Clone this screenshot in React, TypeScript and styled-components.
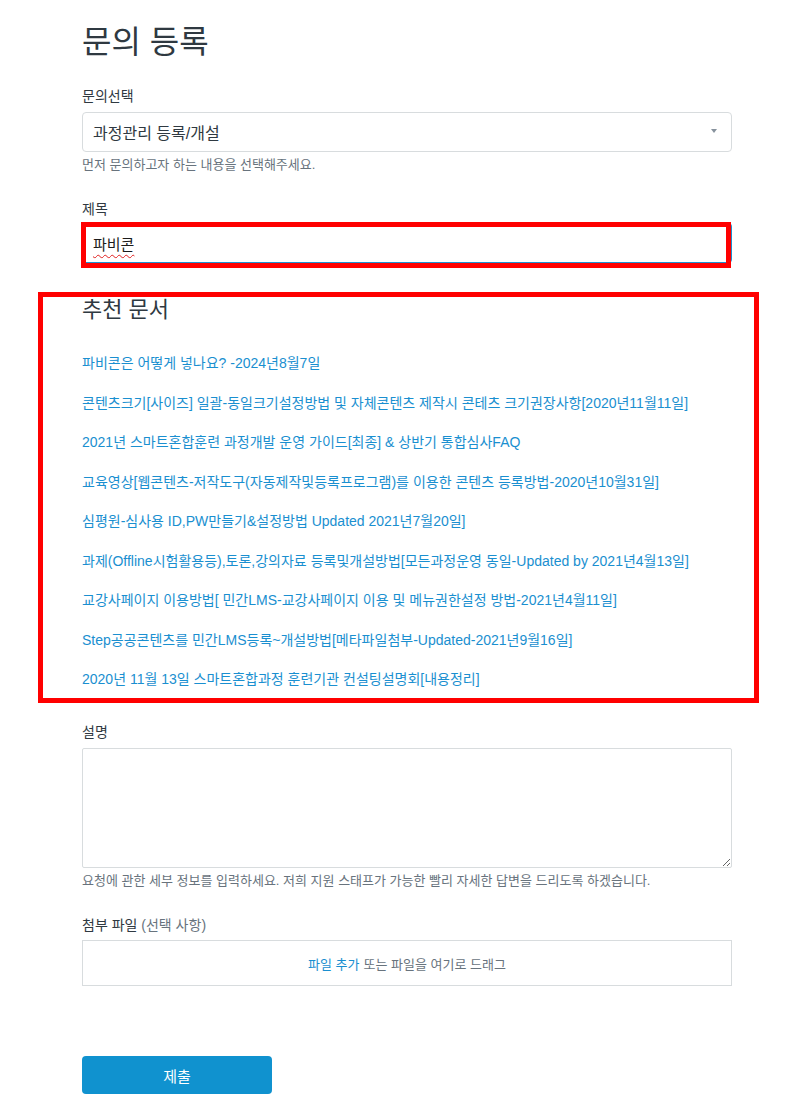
import React from "react";
import styled, { createGlobalStyle } from "styled-components";

const Global = createGlobalStyle`
  html, body { margin: 0; padding: 0; background: #fff; }
  body { font-family: "Liberation Sans", "Noto Sans CJK KR", sans-serif; color: #2f3941; }
  * { box-sizing: border-box; }
`;

const Page = styled.div`
  position: relative;
  width: 805px;
  min-height: 1117px;
  padding: 22px 0 0 82px;
`;

const Container = styled.div`
  width: 650px;
  display: flex;
  flex-direction: column;
`;

const Title = styled.h1`
  margin: 0;
  font-size: 32px;
  line-height: 40px;
  font-weight: 400;
  color: #2f3941;
`;

const Field = styled.div<{ $top: number }>`
  display: flex;
  flex-direction: column;
  margin-top: ${(p) => p.$top}px;
`;

const Label = styled.label<{ $gap?: number }>`
  font-size: 14px;
  line-height: 20px;
  color: #2f3941;
  margin-bottom: ${(p) => p.$gap ?? 6}px;
`;

const Optional = styled.span`
  color: #68737d;
`;

const Select = styled.div`
  position: relative;
  height: 40px;
  border: 1px solid #d8dcde;
  border-radius: 4px;
  padding: 0 10px;
  display: flex;
  align-items: center;
  font-size: 16px;
  color: #2f3941;
`;

const Caret = styled.span`
  position: absolute;
  right: 14px;
  top: 16px;
  width: 0;
  height: 0;
  border-left: 3px solid transparent;
  border-right: 3px solid transparent;
  border-top: 4px solid #87929d;
`;

const Hint = styled.p`
  margin: 4px 0 0;
  font-size: 13px;
  line-height: 18px;
  color: #68737d;
`;

const TextInput = styled.div`
  height: 40px;
  border: 1px solid #d8dcde;
  border-right-color: #1f91d0;
  border-bottom-color: #1f91d0;
  border-radius: 4px;
  padding: 0 10px;
  display: flex;
  align-items: center;
  font-size: 15px;
  color: #1b1b1b;
`;

const Spelled = styled.span`
  text-decoration: underline wavy #e0201f;
  text-decoration-thickness: 1px;
  text-underline-offset: 4px;
`;

const SectionTitle = styled.h2`
  margin: 0;
  font-size: 22px;
  line-height: 28px;
  font-weight: 400;
  color: #2f3941;
`;

const LinkList = styled.ul`
  list-style: none;
  margin: 29px 0 0;
  padding: 0;
  display: flex;
  flex-direction: column;
  gap: 19.5px;
`;

const DocLink = styled.a`
  display: block;
  font-size: 14px;
  line-height: 20px;
  color: #1a8fd0;
  text-decoration: none;
  white-space: nowrap;
`;

const TextArea = styled.textarea`
  height: 120px;
  width: 100%;
  border: 1px solid #d8dcde;
  border-radius: 2px;
  resize: vertical;
  font-family: inherit;
  margin: 0;
  display: block;
`;

const DropZone = styled.div`
  height: 46px;
  border: 1px solid #d8dcde;
  display: flex;
  align-items: center;
  justify-content: center;
  font-size: 13px;
  color: #68737d;
  gap: 4px;
`;

const AddLink = styled.span`
  color: #1a8fd0;
`;

const SubmitButton = styled.button`
  margin-top: 70px;
  width: 190px;
  height: 38px;
  border: none;
  border-radius: 4px;
  background: #1092cf;
  color: #fff;
  font-family: inherit;
  font-size: 15px;
`;

const Highlight = styled.div<{ $x: number; $y: number; $w: number; $h: number }>`
  position: absolute;
  left: ${(p) => p.$x}px;
  top: ${(p) => p.$y}px;
  width: ${(p) => p.$w}px;
  height: ${(p) => p.$h}px;
  border: 5px solid #ff0000;
  pointer-events: none;
`;

const docs = [
  "파비콘은 어떻게 넣나요? -2024년8월7일",
  "콘텐츠크기[사이즈] 일괄-동일크기설정방법 및 자체콘텐츠 제작시 콘테츠 크기권장사항[2020년11월11일]",
  "2021년 스마트혼합훈련 과정개발 운영 가이드[최종] & 상반기 통합심사FAQ",
  "교육영상[웹콘텐츠-저작도구(자동제작및등록프로그램)를 이용한 콘텐츠 등록방법-2020년10월31일]",
  "심평원-심사용 ID,PW만들기&설정방법 Updated 2021년7월20일]",
  "과제(Offline시험활용등),토론,강의자료 등록및개설방법[모든과정운영 동일-Updated by 2021년4월13일]",
  "교강사페이지 이용방법[ 민간LMS-교강사페이지 이용 및 메뉴권한설정 방법-2021년4월11일]",
  "Step공공콘텐츠를 민간LMS등록~개설방법[메타파일첨부-Updated-2021년9월16일]",
  "2020년 11월 13일 스마트혼합과정 훈련기관 컨설팅설명회[내용정리]",
];

export default function App() {
  return (
    <>
      <Global />
      <Page>
        <Container>
          <Title>문의 등록</Title>
          <Field $top={24}>
            <Label>문의선택</Label>
            <Select>
              과정관리 등록/개설
              <Caret />
            </Select>
            <Hint>먼저 문의하고자 하는 내용을 선택해주세요.</Hint>
          </Field>
          <Field $top={25}>
            <Label $gap={4}>제목</Label>
            <TextInput>
              <Spelled>파비콘</Spelled>
            </TextInput>
          </Field>
          <Field $top={33}>
            <SectionTitle>추천 문서</SectionTitle>
            <LinkList>
              {docs.map((d) => (
                <li key={d}>
                  <DocLink href="#">{d}</DocLink>
                </li>
              ))}
            </LinkList>
          </Field>
          <Field $top={33}>
            <Label>설명</Label>
            <TextArea />
            <Hint>요청에 관한 세부 정보를 입력하세요. 저희 지원 스태프가 가능한 빨리 자세한 답변을 드리도록 하겠습니다.</Hint>
          </Field>
          <Field $top={25}>
            <Label $gap={5}>
              첨부 파일 <Optional>(선택 사항)</Optional>
            </Label>
            <DropZone>
              <AddLink>파일 추가</AddLink>
              <span>또는 파일을 여기로 드래그</span>
            </DropZone>
          </Field>
          <SubmitButton type="button">제출</SubmitButton>
        </Container>
        <Highlight $x={81} $y={222} $w={650} $h={46} />
        <Highlight $x={38} $y={292} $w={721} $h={411} />
      </Page>
    </>
  );
}
